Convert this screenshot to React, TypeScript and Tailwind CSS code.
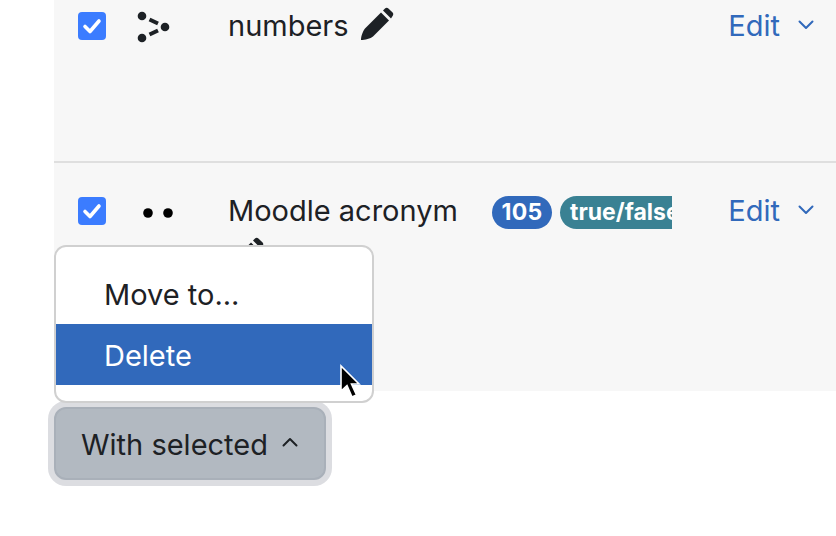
import React from "react";

const font = { fontFamily: "Inter, 'Liberation Sans', sans-serif" };

function Check() {
  return (
    <div className="w-[28px] h-[28px] rounded-[4px] bg-[#3b7cff] flex items-center justify-center shrink-0">
      <svg width="22" height="22" viewBox="0 0 22 22" fill="none">
        <path d="M4 11.5 L9 16.5 L18 6" stroke="#fff" strokeWidth="3.6" strokeLinecap="round" strokeLinejoin="round" />
      </svg>
    </div>
  );
}

function Chevron() {
  return (
    <svg width="16" height="10" viewBox="0 0 16 10" fill="none" className="ml-[18px]">
      <path d="M1.5 1.5 L8 8 L14.5 1.5" stroke="#3169bb" strokeWidth="2" strokeLinecap="round" strokeLinejoin="round" />
    </svg>
  );
}

function Pencil({ className = "" }: { className?: string }) {
  return (
    <svg width="34" height="34" viewBox="0 0 34 34" className={className}>
      <path d="M1 33 C1 29 3 24 5 21.5 L21 5.5 L29 13.5 L13 29.5 C10.5 31.5 5 33 1 33 Z M23 3.5 L25 1.5 C26 .6 27.4 .6 28.4 1.5 L32.6 5.6 C33.5 6.6 33.5 8 32.6 9 L31 11.5 Z" fill="#1d2125" />
    </svg>
  );
}

function Edit() {
  return (
    <div className="flex items-center h-[26px] text-[#3169bb] text-[29px] leading-none">
      <span>Edit</span>
      <Chevron />
    </div>
  );
}

export default function App() {
  return (
    <div className="w-[836px] h-[536px] overflow-hidden bg-white text-[#1d2125] pl-[54px]" style={font}>
      <div className="bg-[#f7f7f7] h-[391px] flex flex-col">
        <div className="h-[163px] border-b-2 border-[#dfdfdf] flex items-start pl-[24px] pr-[22px] pt-[12px]">
          <Check />
          <svg width="34" height="34" viewBox="0 0 34 34" className="ml-[30px] -mt-[1px] shrink-0">
            <circle cx="6" cy="5" r="4.3" fill="#1d2125" />
            <circle cx="6" cy="27" r="4.3" fill="#1d2125" />
            <circle cx="29" cy="16" r="4.3" fill="#1d2125" />
            <path d="M13.5 8.5 L22 12.5 M13.5 23.5 L22 19.5" stroke="#1d2125" strokeWidth="4" />
          </svg>
          <div className="ml-[58px] flex-1 flex items-center h-[26px] text-[29px] leading-none">
            <span>numbers</span>
            <Pencil className="ml-[11px] -mt-[2px]" />
          </div>
          <Edit />
        </div>
        <div className="flex items-start pl-[24px] pr-[22px] pt-[34px]">
          <Check />
          <svg width="38" height="12" viewBox="0 0 38 12" className="ml-[30px] mt-[10px] shrink-0">
            <circle cx="12" cy="6" r="4.8" fill="#000" />
            <circle cx="32" cy="6" r="4.8" fill="#000" />
          </svg>
          <div className="ml-[54px] flex flex-col w-[264px] text-[29px] leading-none shrink-0">
            <span className="h-[26px] flex items-center whitespace-nowrap">Moodle acronym</span>
            <Pencil className="ml-[2px] mt-[14px]" />
          </div>
          <div className="w-[180px] overflow-hidden flex items-center gap-[8px] h-[33px] -mt-[1px] text-white font-bold text-[23px]">
            <span className="h-[33px] w-[60px] shrink-0 rounded-full bg-[#3169bb] flex items-center justify-center tracking-[0.3px]">105</span>
            <span className="h-[33px] rounded-l-full rounded-r-[16px] bg-[#3a8193] px-[10px] flex items-center whitespace-nowrap">true/false</span>
          </div>
          <div className="flex-1" />
          <Edit />
        </div>
      </div>
      <div className="relative mt-[16px] w-[272px]">
        <div className="absolute left-0 bottom-[77px] w-[320px] h-[158px] bg-white border-2 border-[#d0d0d0] rounded-[12px] flex flex-col pt-[16px] text-[29px]">
          <div className="h-[61px] pl-[48px] pt-[2px] flex items-center">Move to...</div>
          <div className="h-[61px] pl-[48px] pt-[2px] flex items-center bg-[#3169bb] text-white">Delete</div>
        </div>
        <button className="w-[272px] h-[73px] rounded-[12px] bg-[#b2b9c1] border-2 border-[#a9b0b9] ring-[6px] ring-[#dcdde1] text-[29px] flex items-center pl-[25px] pt-[2px] text-[#1d2125]">
          <span>With selected</span>
          <svg width="16" height="10" viewBox="0 0 16 10" fill="none" className="ml-[14px] -mt-[6px]">
            <path d="M1.5 8.5 L8 2 L14.5 8.5" stroke="#1d2125" strokeWidth="2" strokeLinecap="round" strokeLinejoin="round" />
          </svg>
        </button>
      </div>
      <svg width="24" height="36" viewBox="0 0 24 36" className="absolute left-[339px] top-[364px]">
        <path d="M2 2 L2 27 L8 21.5 L13 33 L17.5 31 L12.5 20 L20 20 Z" fill="#000" stroke="#fff" strokeWidth="1.6" />
      </svg>
    </div>
  );
}
